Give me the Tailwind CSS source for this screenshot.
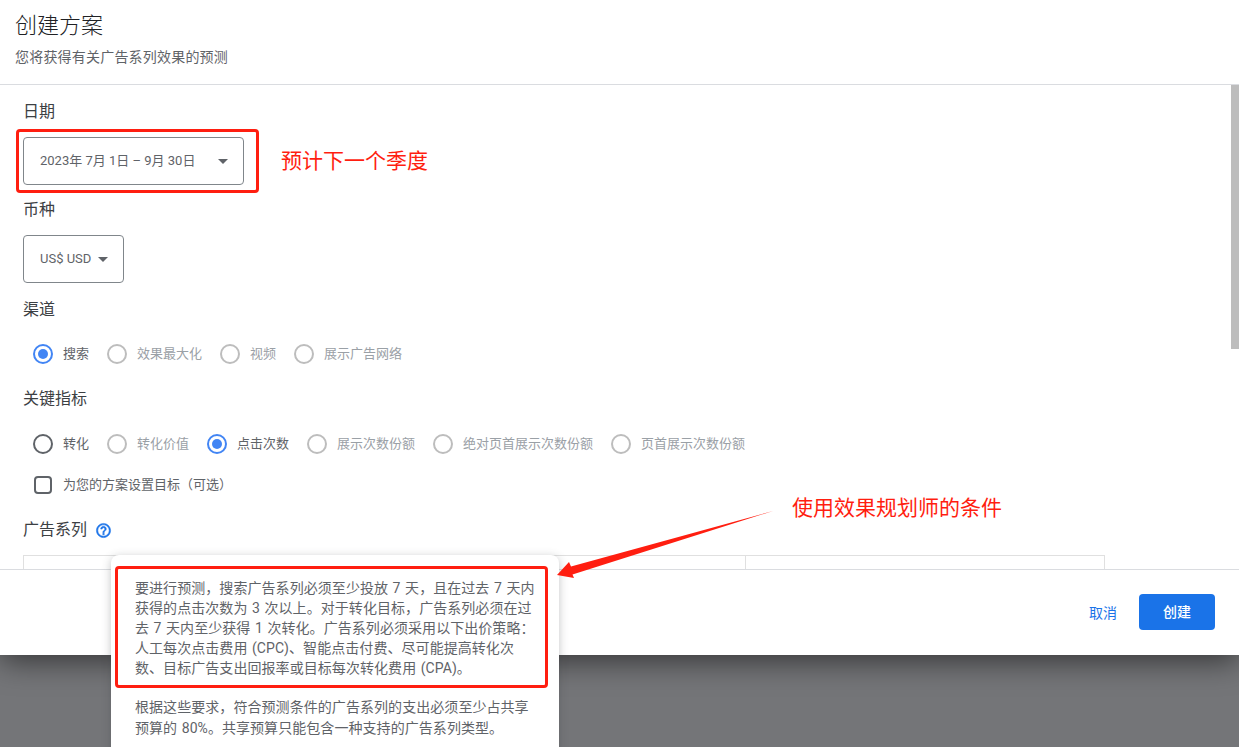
<!DOCTYPE html>
<html lang="zh-CN">
<head>
    <meta charset="UTF-8">
    <meta name="viewport" content="width=device-width, initial-scale=1.0">
    <title>创建方案</title>
    <script src="https://cdn.jsdelivr.net/npm/@tailwindcss/browser@4"></script>
</head>
<body class="font-['Roboto','Noto_Sans_CJK_SC',sans-serif] bg-[#747578] text-[#3c4043]">
    <div class="relative h-[747px] w-[1239px] overflow-hidden">
        <div class="flex h-[655px] flex-col rounded-b-lg bg-white shadow-[0_6px_30px_rgba(0,0,0,0.55)]">
            <!-- header -->
            <div class="h-[85px] shrink-0 border-b border-[#dadce0] pl-[15px] pt-[10px]">
                <h1 class="text-[22px] leading-[32px] font-light text-[#202124]">创建方案</h1>
                <p class="mt-[5px] text-[14px] leading-[20px] tracking-[0.2px] text-[#5f6368]">您将获得有关广告系列效果的预测</p>
            </div>

            <!-- body -->
            <div class="relative flex-1 overflow-hidden pl-[23px] pt-[17px]">
                <div class="h-5 text-[16px] leading-5">日期</div>
                <div class="mt-[15px] flex h-12 w-[221px] items-center justify-between rounded border border-[#80868b] pl-4 pr-[15px] text-[13px] text-[#5f6368]">
                    <span>2023年 7月 1日 – 9月 30日</span>
                    <span class="h-0 w-0 border-x-[5px] border-t-[5px] border-x-transparent border-t-[#5f6368]"></span>
                </div>

                <div class="mt-[15px] h-5 text-[16px] leading-5">币种</div>
                <div class="mt-[15px] flex h-12 w-[101px] items-center justify-between rounded border border-[#80868b] pl-4 pr-[15px] text-[13px] text-[#5f6368]">
                    <span>US$ USD</span>
                    <span class="h-0 w-0 border-x-[5px] border-t-[5px] border-x-transparent border-t-[#5f6368]"></span>
                </div>

                <div class="mt-[17px] h-5 text-[16px] leading-5">渠道</div>
                <div class="mt-6 flex h-5 items-center gap-[18px] pl-[10px] text-[13px]">
                    <label class="flex items-center gap-[10px]">
                        <span class="flex size-5 items-center justify-center rounded-full border-2 border-[#4285f4]"><span class="size-[10px] rounded-full bg-[#4285f4]"></span></span>
                        <span class="text-[#5f6368]">搜索</span>
                    </label>
                    <label class="flex items-center gap-[10px]">
                        <span class="size-5 rounded-full border-2 border-[#bdbdbd]"></span>
                        <span class="text-[#9aa0a6]">效果最大化</span>
                    </label>
                    <label class="flex items-center gap-[10px]">
                        <span class="size-5 rounded-full border-2 border-[#bdbdbd]"></span>
                        <span class="text-[#9aa0a6]">视频</span>
                    </label>
                    <label class="flex items-center gap-[10px]">
                        <span class="size-5 rounded-full border-2 border-[#bdbdbd]"></span>
                        <span class="text-[#9aa0a6]">展示广告网络</span>
                    </label>
                </div>

                <div class="mt-[25px] h-5 text-[16px] leading-5">关键指标</div>
                <div class="mt-[25px] flex h-5 items-center gap-[18px] pl-[10px] text-[13px]">
                    <label class="flex items-center gap-[10px]">
                        <span class="size-5 rounded-full border-2 border-[#5f6368]"></span>
                        <span class="text-[#5f6368]">转化</span>
                    </label>
                    <label class="flex items-center gap-[10px]">
                        <span class="size-5 rounded-full border-2 border-[#bdbdbd]"></span>
                        <span class="text-[#9aa0a6]">转化价值</span>
                    </label>
                    <label class="flex items-center gap-[10px]">
                        <span class="flex size-5 items-center justify-center rounded-full border-2 border-[#4285f4]"><span class="size-[10px] rounded-full bg-[#4285f4]"></span></span>
                        <span class="text-[#5f6368]">点击次数</span>
                    </label>
                    <label class="flex items-center gap-[10px]">
                        <span class="size-5 rounded-full border-2 border-[#bdbdbd]"></span>
                        <span class="text-[#9aa0a6]">展示次数份额</span>
                    </label>
                    <label class="flex items-center gap-[10px]">
                        <span class="size-5 rounded-full border-2 border-[#bdbdbd]"></span>
                        <span class="text-[#9aa0a6]">绝对页首展示次数份额</span>
                    </label>
                    <label class="flex items-center gap-[10px]">
                        <span class="size-5 rounded-full border-2 border-[#bdbdbd]"></span>
                        <span class="text-[#9aa0a6]">页首展示次数份额</span>
                    </label>
                </div>

                <label class="mt-[21px] flex h-5 items-center gap-[11px] pl-[11px] text-[13px] text-[#5f6368]">
                    <span class="size-[18px] rounded-sm border-2 border-[#5f6368]"></span>
                    <span>为您的方案设置目标（可选）</span>
                </label>

                <div class="mt-[25px] flex h-5 items-center gap-[8px] text-[16px] leading-5">
                    <span>广告系列</span>
                    <svg class="size-[17px]" viewBox="0 0 24 24" fill="#1a73e8" stroke="#1a73e8" stroke-width="0.7"><path d="M11 18h2v-2h-2v2zm1-16C6.48 2 2 6.48 2 12s4.48 10 10 10 10-4.48 10-10S17.52 2 12 2zm0 18c-4.41 0-8-3.59-8-8s3.59-8 8-8 8 3.59 8 8-3.59 8-8 8zm0-14c-2.21 0-4 1.79-4 4h2c0-1.1.9-2 2-2s2 .9 2 2c0 2-3 1.75-3 5h2c0-2.25 3-2.5 3-5 0-2.21-1.79-4-4-4z"/></svg>
                </div>
                <div class="mt-[15px] grid h-[60px] w-[1082px] grid-cols-[722px_1fr] border border-[#e0e0e0]">
                    <div class="border-r border-[#e0e0e0]"></div>
                    <div></div>
                </div>

                <!-- scrollbar -->
                <div class="absolute right-0 top-0 h-[264px] w-2 bg-[#bdbdbd]"></div>
            </div>

            <!-- footer -->
            <div class="flex h-[86px] shrink-0 items-center justify-end gap-[22px] border-t border-[#dadce0] bg-white pb-[1px] pr-6">
                <button class="pt-[3px] text-[14px] text-[#1a73e8]">取消</button>
                <button class="h-9 w-[76px] rounded bg-[#1a73e8] pt-[1px] text-[14px] font-medium text-white">创建</button>
            </div>
        </div>

        <!-- tooltip over the dialog -->
        <div class="absolute left-[111px] top-[555px] h-[220px] w-[448px] rounded-lg bg-white px-6 pt-[23px] text-[14px] leading-5 tracking-[0.06px] text-[#5f6368] [word-spacing:1px] shadow-[0_2px_10px_rgba(60,64,67,0.3)]">
            <p>要进行预测，搜索广告系列必须至少投放 7 天，且在过去 7 天内<br>获得的点击次数为 3 次以上。对于转化目标，广告系列必须在过<br>去 7 天内至少获得 1 次转化。广告系列必须采用以下出价策略：<br>人工每次点击费用 (CPC)、智能点击付费、尽可能提高转化次<br>数、目标广告支出回报率或目标每次转化费用 (CPA)。</p>
            <p class="mt-[19px] leading-[21px]">根据这些要求，符合预测条件的广告系列的支出必须至少占共享<br>预算的 80%。共享预算只能包含一种支持的广告系列类型。</p>
        </div>

        <!-- red annotations -->
        <div class="absolute left-4 top-[129px] h-[64px] w-[243px] rounded-sm border-[3px] border-[#ff1e10]"></div>
        <div class="absolute left-[115px] top-[566px] h-[122px] w-[433px] rounded-sm border-[3px] border-[#ff1e10]"></div>
        <div class="absolute left-[281px] top-[146px] text-[21px] leading-[30px] text-[#ff1e10]">预计下一个季度</div>
        <div class="absolute left-[792px] top-[493px] text-[21px] leading-[30px] text-[#ff1e10]">使用效果规划师的条件</div>
        <svg class="absolute left-0 top-0" width="1239" height="747" fill="none">
            <polygon points="773,511 571,566.5 569,562 557,575 574,578 572.5,574.5" fill="#ff1e10"/>
        </svg>
    </div>
</body>
</html>
